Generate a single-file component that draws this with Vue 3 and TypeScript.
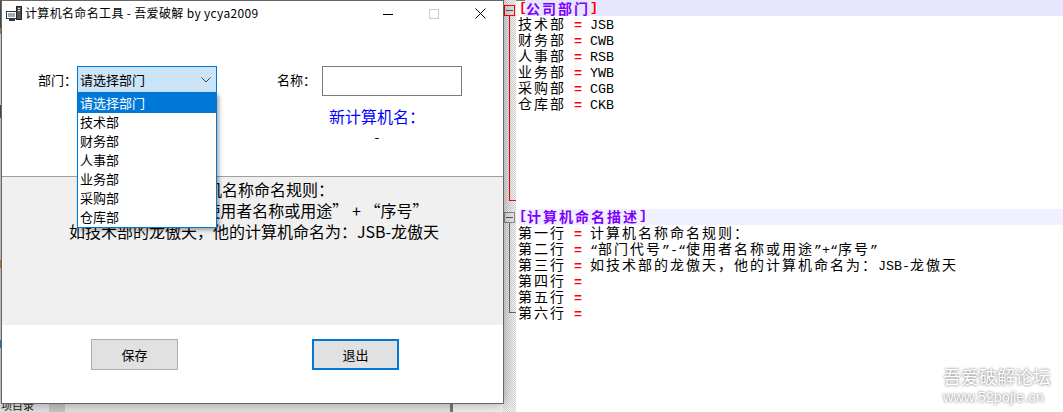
<script setup lang="ts">
interface Seg { text: string; zh: boolean }
interface Line { key: string; value: string }

const departments: string[] = ['技术部', '财务部', '人事部', '业务部', '采购部', '仓库部']

const deptLines: Line[] = [
  { key: '技术部', value: 'JSB' },
  { key: '财务部', value: 'CWB' },
  { key: '人事部', value: 'RSB' },
  { key: '业务部', value: 'YWB' },
  { key: '采购部', value: 'CGB' },
  { key: '仓库部', value: 'CKB' }
]

const descLines: Line[] = [
  { key: '第一行', value: '计算机名称命名规则\uFF1A' },
  { key: '第二行', value: '“部门代号”-“使用者名称或用途”+“序号”' },
  { key: '第三行', value: '如技术部的龙傲天\uFF0C他的计算机命名为\uFF1AJSB-龙傲天' },
  { key: '第四行', value: '' },
  { key: '第五行', value: '' },
  { key: '第六行', value: '' }
]

const panelLines: string[] = [
  '计算机名称命名规则\uFF1A',
  '“部门代号” - “使用者名称或用途” + “序号”',
  '如技术部的龙傲天\uFF0C他的计算机命名为\uFF1AJSB-龙傲天'
]

const colon = '\uFF1A'

function segs(text: string): Seg[] {
  const parts = text.match(/[\u4e00-\u9fff\uff00-\uffef]+|[^\u4e00-\u9fff\uff00-\uffef]+/g) ?? []
  return parts.map((p) => ({ text: p, zh: /[\u4e00-\u9fff\uff00-\uffef]/.test(p) }))
}
</script>

<template>
  <div class="desktop" lang="zh-CN">
    <section class="editor">
      <svg class="margin" width="13" height="412" viewBox="0 0 13 412">
        <line x1="6.5" y1="16" x2="6.5" y2="201" stroke="#f00" />
        <line x1="6" y1="200.5" x2="13" y2="200.5" stroke="#f00" />
        <rect x="1.5" y="5.5" width="10" height="10" fill="#ddd" stroke="#f00" />
        <line x1="3" y1="10.5" x2="10" y2="10.5" stroke="#555" />
        <line x1="6.5" y1="223" x2="6.5" y2="313" stroke="#666" />
        <line x1="6" y1="312.5" x2="14" y2="312.5" stroke="#666" />
        <rect x="1.5" y="212.5" width="10" height="10" fill="#e4e4e4" stroke="#888" />
        <line x1="3" y1="217.5" x2="10" y2="217.5" stroke="#555" />
      </svg>
      <div class="code">
        <div class="block first">
          <div class="head">
            <span class="br red">[</span>
            <span class="fill one"><span class="zh title">公司部门</span><span class="br red">]</span></span>
          </div>
          <div v-for="l in deptLines" :key="l.key" class="row">
            <span class="zh">{{ l.key }}</span><span class="eq"> = </span><span>{{ l.value }}</span>
          </div>
        </div>
        <div class="block">
          <div class="head two">
            <span class="br purple">[</span><span class="zh title">计算机命名描述</span><span class="br purple">]</span>
          </div>
          <div v-for="l in descLines" :key="l.key" class="row">
            <span class="zh">{{ l.key }}</span><span class="eq"> = </span><span
              v-for="(s, i) in segs(l.value)"
              :key="i"
              :class="{ zh: s.zh }"
            >{{ s.text }}</span>
          </div>
        </div>
      </div>
    </section>

    <div class="edge"></div>

    <div class="below">
      <span class="below-text">项目录</span>
      <span class="below-chip"></span>
      <span class="below-bar"></span>
    </div>

    <div class="watermark">
      <div class="wm-cn">吾爱破解论坛</div>
      <div class="wm-en">www.52pojie.cn</div>
    </div>

    <main class="window">
      <header class="titlebar">
        <svg class="app-icon" width="16" height="16" viewBox="0 0 16 16">
          <rect x="0.5" y="5.5" width="10" height="7" fill="#fff" stroke="#333" />
          <rect x="2" y="7" width="7" height="4" fill="#9ab" />
          <rect x="3" y="13" width="6" height="2" fill="#333" />
          <rect x="10.5" y="0.5" width="5" height="13" fill="#555" stroke="#222" />
          <rect x="12" y="2" width="2" height="1" fill="#ddd" />
          <rect x="12" y="4" width="2" height="1" fill="#ddd" />
        </svg>
        <span class="title-text">计算机名命名工具 - 吾爱破解 by ycya2009</span>
        <div class="controls">
          <svg width="10" height="10" viewBox="0 0 10 10"><line x1="0" y1="5.5" x2="10" y2="5.5" stroke="#000" /></svg>
          <svg width="10" height="10" viewBox="0 0 10 10"><rect x="0.5" y="0.5" width="9" height="9" fill="none" stroke="#ccc" /></svg>
          <svg width="11" height="11" viewBox="0 0 11 11"><path d="M0.5 0.5L10.5 10.5M10.5 0.5L0.5 10.5" stroke="#000" fill="none" /></svg>
        </div>
      </header>

      <div class="form">
        <div class="left-col">
          <label class="lbl dept-lbl">部门{{ colon }}</label>
          <div class="combo-wrap">
            <div class="combo">
              <span>请选择部门</span>
              <svg width="10" height="6" viewBox="0 0 10 6"><path d="M0.5 0.5L5 5L9.5 0.5" fill="none" stroke="#444" /></svg>
            </div>
            <ul class="list">
              <li class="selected">请选择部门</li>
              <li v-for="d in departments" :key="d">{{ d }}</li>
            </ul>
          </div>
        </div>
        <div class="right-col">
          <div class="name-row">
            <label class="lbl name-lbl">名称{{ colon }}</label>
            <div class="input"></div>
          </div>
          <div class="result">新计算机名{{ colon }}</div>
          <div class="dash">-</div>
        </div>
      </div>

      <div class="panel">
        <p v-for="p in panelLines" :key="p">{{ p }}</p>
      </div>

      <footer class="footer">
        <button class="btn">保存</button>
        <button class="btn focus">退出</button>
      </footer>
    </main>
  </div>
</template>

<style scoped>
.desktop {
  position: relative;
  width: 1063px;
  height: 412px;
  overflow: hidden;
  background: #fff;
  font-family: "Noto Sans CJK SC", "Liberation Sans", sans-serif;
}

/* editor behind the dialog */
.editor {
  position: absolute;
  left: 503px;
  top: 0;
  right: 0;
  bottom: 0;
  display: flex;
  border-top: 1px solid #777;
  box-sizing: border-box;
}
.margin {
  flex: none;
  margin-top: -1px;
  background: repeating-conic-gradient(#d2d2d2 0 25%, #f6f6f6 0 50%) 0 0 / 2px 2px;
}
.code {
  flex: 1;
  margin-top: -1px;
  font: 13.33px/16px "Liberation Mono", "Noto Sans CJK SC", monospace;
  color: #000;
  white-space: pre;
}
.block.first {
  height: 209px;
}
.head {
  display: flex;
  height: 16px;
  font-weight: 700;
}
.head.two {
  background: #f0f0ff;
  margin-left: 3px;
  line-height: 14px;
}
.br {
  width: 8px;
  text-align: center;
}
.red { color: #f00; }
.purple { color: #8000ff; }
.head > .red { margin-left: 3px; margin-right: -2px; }
.fill {
  flex: 1;
  display: flex;
}
.fill.one {
  background: #e6e6ff;
  padding-left: 1px;
}
.title {
  color: #8000ff;
  font-weight: 700;
}
.row {
  height: 16px;
  line-height: 14px;
  padding-left: 2px;
}
.zh {
  font-family: "Noto Sans CJK SC", sans-serif;
  font-size: 14px;
  letter-spacing: 2px;
}
.eq {
  color: #f00;
  font-weight: 700;
}

/* desktop leftovers under the dialog */
.edge {
  position: absolute;
  left: 0;
  top: 0;
  width: 1px;
  height: 412px;
  background: linear-gradient(#555 0 28px, #c84 28px 34px, #eee 34px 105px, #648 105px 118px, #ddd 118px 260px, #c84 260px 268px, #ddd 268px 340px, #38c 340px 348px, #ddd 348px);
}
.below {
  position: absolute;
  left: 0;
  top: 404px;
  width: 503px;
  height: 8px;
  background: #e4e4e4;
  overflow: hidden;
}
.below-text {
  position: absolute;
  left: 1px;
  top: -6px;
  font-size: 11px;
  line-height: 14px;
  color: #222;
}
.below-chip {
  position: absolute;
  left: 49px;
  top: 0;
  width: 16px;
  height: 8px;
  background: #c8c8c8;
}
.below-bar {
  position: absolute;
  left: 450px;
  top: 0;
  width: 53px;
  height: 8px;
  background: #f2f2f2;
  border-left: 3px solid #777;
  box-sizing: border-box;
}

.watermark {
  position: absolute;
  left: 943px;
  top: 365px;
  width: 110px;
  color: #fff;
  text-shadow: 0 0 3px #8f8f8f, 0 0 2px #aaa;
}
.wm-cn {
  font-size: 18px;
  line-height: 22px;
}
.wm-en {
  font-family: "Liberation Sans", sans-serif;
  font-size: 14.5px;
  line-height: 18px;
  margin-top: 1px;
}

/* dialog */
.window {
  position: absolute;
  left: 1px;
  top: 0;
  width: 503px;
  height: 404px;
  box-sizing: border-box;
  border: 1px solid #666;
  background: #fff;
  display: flex;
  flex-direction: column;
  box-shadow: 0 0 12px rgba(0, 0, 0, 0.35);
}
.titlebar {
  flex: none;
  height: 25px;
  display: flex;
  align-items: center;
  padding-left: 4px;
  font-size: 12px;
  color: #000;
}
.app-icon {
  flex: none;
  margin-right: 3px;
}
.title-text {
  white-space: nowrap;
  letter-spacing: 0.34px;
  margin-top: -2px;
}
.controls {
  margin-left: auto;
  display: flex;
  align-items: center;
  gap: 36px;
  padding-right: 17px;
}
.form {
  flex: none;
  height: 150px;
  display: flex;
  padding: 40px 0 0 36px;
  box-sizing: border-box;
  font-size: 13px;
  color: #000;
}
.left-col {
  display: flex;
  align-items: flex-start;
  width: 239px;
}
.lbl {
  line-height: 27px;
  white-space: nowrap;
}
.dept-lbl {
  width: 39px;
  flex: none;
}
.combo-wrap {
  position: relative;
  width: 140px;
}
.combo {
  height: 27px;
  box-sizing: border-box;
  border: 1px solid #0078d7;
  background: #cce4f7;
  display: flex;
  align-items: center;
  justify-content: space-between;
  padding: 0 5px 0 2px;
  font-size: 13px;
}
.list {
  position: absolute;
  left: 0;
  top: 27px;
  width: 140px;
  margin: 0;
  padding: 0;
  list-style: none;
  background: #fff;
  border: 1px solid #0078d7;
  border-top: 0;
  box-sizing: border-box;
  box-shadow: 2px 2px 4px rgba(0, 0, 0, 0.35);
  z-index: 2;
}
.list li {
  height: 19px;
  line-height: 17px;
  padding-left: 2px;
}
.list li.selected {
  background: #0078d7;
  color: #fff;
  height: 20px;
  line-height: 19px;
}
.right-col {
  width: 190px;
}
.name-row {
  display: flex;
  align-items: flex-start;
}
.name-lbl {
  width: 45px;
  flex: none;
}
.input {
  width: 140px;
  height: 30px;
  box-sizing: border-box;
  border: 1px solid #7a7a7a;
  background: #fff;
}
.result {
  margin-top: 10px;
  padding-left: 10px;
  line-height: 20px;
  font-size: 16px;
  color: #0000ff;
  text-align: center;
}
.dash {
  line-height: 20px;
  font-size: 14px;
  text-align: center;
  padding-left: 10px;
}
.panel {
  flex: none;
  height: 149px;
  box-sizing: border-box;
  background: #f0f0f0;
  border-top: 1px solid #a0a0a0;
  padding: 2px 0 0 3px;
  font-size: 16px;
  line-height: 21px;
  color: #000;
  text-align: center;
}
.panel p {
  margin: 0;
  white-space: nowrap;
}
.footer {
  flex: 1;
  display: flex;
  align-items: flex-start;
  gap: 134px;
  padding: 14px 0 0 89px;
}
.btn {
  width: 87px;
  height: 31px;
  box-sizing: border-box;
  background: #e1e1e1;
  border: 1px solid #adadad;
  font: 13px "Noto Sans CJK SC", sans-serif;
  color: #000;
  padding: 0;
}
.btn.focus {
  border: 2px solid #0078d7;
}
</style>
